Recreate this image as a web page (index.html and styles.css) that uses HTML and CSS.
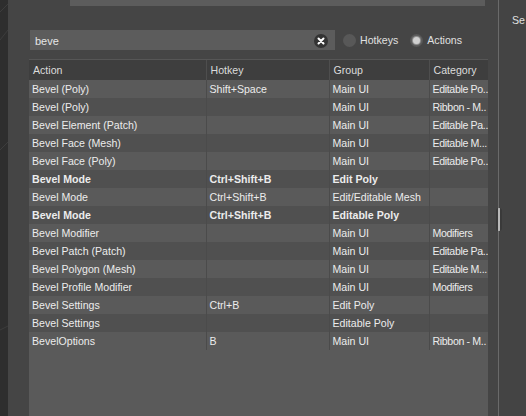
FILE: index.html
```html
<!DOCTYPE html>
<html>
<head>
<meta charset="utf-8">
<link rel="stylesheet" href="styles.css">
</head>
<body>
<div class="app">
  <div class="viewport">
    <svg width="8" height="416" viewBox="0 0 8 416"><path d="M0 12 L8 4 M0 40 L8 30 M0 150 L8 142 M0 330 L8 326" stroke="#3d3d3d" stroke-width="1" fill="none"/></svg>
  </div>
  <div class="dialog">
    <div class="filter-row">
      <span class="filter-label">Filter:</span>
      <div class="filter-input">All Actions</div>
    </div>
    <div class="search-row">
      <div class="search-box">
        <span class="search-text">beve</span>
        <span class="clear"><svg width="8" height="8" viewBox="0 0 8 8"><path d="M1.5 1.5 L6.5 6.5 M6.5 1.5 L1.5 6.5" stroke="#fff" stroke-width="2" stroke-linecap="round"/></svg></span>
      </div>
      <label class="radio"><span class="dot"></span>Hotkeys</label>
      <label class="radio"><span class="dot on"></span>Actions</label>
    </div>
    <div class="table-wrap">
      <table class="grid">
        <colgroup><col class="c1"><col class="c2"><col class="c3"><col class="c4"></colgroup>
        <thead><tr><th>Action</th><th>Hotkey</th><th>Group</th><th>Category</th></tr></thead>
        <tbody>
          <tr><td>Bevel (Poly)</td><td>Shift+Space</td><td>Main UI</td><td>Editable Po..</td></tr>
          <tr><td>Bevel (Poly)</td><td></td><td>Main UI</td><td>Ribbon - M..</td></tr>
          <tr><td>Bevel Element (Patch)</td><td></td><td>Main UI</td><td>Editable Pa..</td></tr>
          <tr><td>Bevel Face (Mesh)</td><td></td><td>Main UI</td><td>Editable M...</td></tr>
          <tr><td>Bevel Face (Poly)</td><td></td><td>Main UI</td><td>Editable Po..</td></tr>
          <tr class="b"><td>Bevel Mode</td><td>Ctrl+Shift+B</td><td>Edit Poly</td><td></td></tr>
          <tr><td>Bevel Mode</td><td>Ctrl+Shift+B</td><td>Edit/Editable Mesh</td><td></td></tr>
          <tr class="b"><td>Bevel Mode</td><td>Ctrl+Shift+B</td><td>Editable Poly</td><td></td></tr>
          <tr><td>Bevel Modifier</td><td></td><td>Main UI</td><td>Modifiers</td></tr>
          <tr><td>Bevel Patch (Patch)</td><td></td><td>Main UI</td><td>Editable Pa..</td></tr>
          <tr><td>Bevel Polygon (Mesh)</td><td></td><td>Main UI</td><td>Editable M...</td></tr>
          <tr><td>Bevel Profile Modifier</td><td></td><td>Main UI</td><td>Modifiers</td></tr>
          <tr><td>Bevel Settings</td><td>Ctrl+B</td><td>Edit Poly</td><td></td></tr>
          <tr><td>Bevel Settings</td><td></td><td>Editable Poly</td><td></td></tr>
          <tr><td>BevelOptions</td><td>B</td><td>Main UI</td><td>Ribbon - M..</td></tr>
        </tbody>
      </table>
    </div>
    <span class="handle"></span>
  </div>
  <div class="side">
    <span class="side-label">Se</span>
  </div>
</div>
</body>
</html>
```

FILE: styles.css
```css
* { box-sizing: border-box; }
html, body { margin: 0; padding: 0; }
body {
  width: 526px;
  height: 416px;
  overflow: hidden;
  background: #2c2c2c;
  font-family: "Liberation Sans", Arial, sans-serif;
  font-size: 10.6px;
  color: #e6e6e6;
}
.app { display: flex; height: 416px; }
.viewport { width: 8px; background: #2e2e2e; flex: none; }
.viewport svg { display: block; }
.dialog {
  position: relative;
  width: 491px;
  flex: none;
  background: #454545;
  border-right: 1px solid #6a6a6a;
  padding-left: 21px;
  display: flex;
  flex-direction: column;
}
.filter-row {
  display: flex;
  align-items: center;
  height: 20px;
  margin-top: -14px;
}
.filter-label { width: 41px; padding-left: 4px; color: #e0e0e0; }
.filter-input {
  width: 415px;
  height: 20px;
  line-height: 20px;
  background: #5c5c5c;
  padding-left: 5px;
  color: #e0e0e0;
}
.search-row {
  display: flex;
  align-items: center;
  height: 20px;
  margin-top: 24px;
}
.search-box {
  margin-left: 1px;
  width: 305px;
  height: 20px;
  background: #5c5c5c;
  display: flex;
  align-items: center;
  justify-content: space-between;
  padding: 1px 7px 0 5px;
  font-size: 11px;
}
.clear {
  width: 14px;
  height: 14px;
  border-radius: 50%;
  background: #333;
  display: flex;
  align-items: center;
  justify-content: center;
}
.clear svg { display: block; }
.radio {
  display: flex;
  align-items: center;
  margin-left: 8px;
  color: #e0e0e0;
}
.radio + .radio { margin-left: 12px; }
.dot {
  width: 13px;
  height: 13px;
  border-radius: 50%;
  background: #585858;
  margin-right: 4px;
  display: flex;
  align-items: center;
  justify-content: center;
}
.dot.on::after {
  content: "";
  width: 7px;
  height: 7px;
  border-radius: 50%;
  background: #d0d0d0;
  box-shadow: 0 0 1px 1px #9a9a9a;
}
.table-wrap {
  margin-top: 9px;
  width: 459px;
  flex: 1;
  background: #5a5a5a;
  border-top: 1px solid #565656;
}
.grid {
  width: 459px;
  border-collapse: collapse;
  table-layout: fixed;
}
.c1 { width: 177px; }
.c2 { width: 123px; }
.c3 { width: 100px; }
.c4 { width: 59px; }
.grid th {
  height: 20px;
  background: #3e3e3e;
  font-weight: normal;
  text-align: left;
  padding: 0 4px;
  color: #dcdcdc;
  border-left: 1px solid #4e4e4e;
}
.grid td {
  height: 18px;
  padding: 0 3px;
  white-space: nowrap;
  overflow: hidden;
  border-left: 1px solid #4b4b4b;
  color: #ececec;
}
.grid td:last-child { letter-spacing: -0.35px; padding-right: 0; }
.grid th:first-child, .grid td:first-child { border-left: none; }
.grid tbody tr:nth-child(odd) td { background: #5a5a5a; }
.grid tbody tr:nth-child(even) td { background: #505050; }
.grid tr.b td { font-weight: bold; }
.handle {
  position: absolute;
  right: -4px;
  top: 208px;
  width: 6px;
  height: 23px;
  border-radius: 3px;
  background: #3a3a3a;
  background-image: radial-gradient(circle, #bdbdbd 0.7px, transparent 0.9px);
  background-size: 6px 2px;
}
.side {
  flex: 1;
  background: #444;
  padding-top: 14px;
  padding-left: 13px;
}
.side-label { color: #e0e0e0; }
```
